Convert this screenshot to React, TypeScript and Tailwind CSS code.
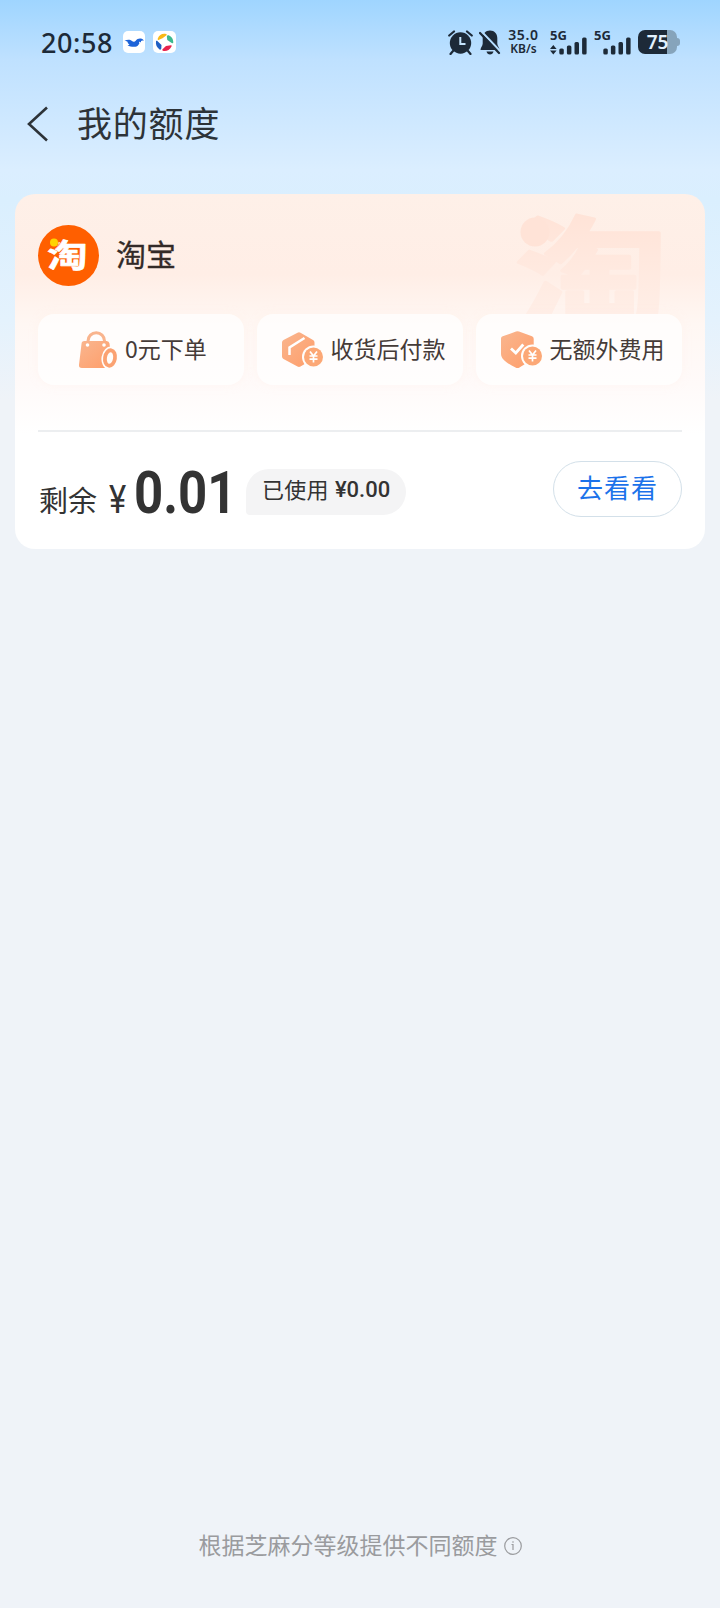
import type { ReactNode } from "react";

const Clock = () => (
    <div className="flex items-center">
        <span className="w-[73px] pl-px font-['Noto_Sans'] text-[27px] leading-none font-medium tracking-[0.6px] text-[#1d2a38]">
            20:58
        </span>
        <svg className="ml-[10px]" width="22" height="22" viewBox="0 0 22 22">
            <rect width="22" height="22" rx="5" fill="#fff" />
            <path
                d="M1.500 9.800C3.500 8.800 5.500 8.500 7.300 9c1.300.4 2.200 1.600 3.400 1.800.8.100 1.500-.3 2-1 1.200-1.700 3-2.600 5-2.300 1.500.2 2.700 1 3.300 2.300-1.200-.4-2.200-.3-3 .3.100.6 0 1-.4 1.400-.5-.6-1-.8-1.600-.6.600 1.300.3 2.300-.6 2.800-.4 1-1.400 1.900-2.900 2-2.500.4-5.500 0-8-1.500 1 0 1.600-.3 2-.8C5.300 13 4.600 12 4.500 10.800 3.500 10.200 2.500 9.900 1.500 9.800Z"
                fill="#1d63d8"
            />
        </svg>
        <svg className="ml-2" width="23" height="22" viewBox="0 0 23 22">
            <rect width="23" height="22" rx="5" fill="#fff" />
            <path d="M4.800 7.500C6 3.800 9.500 2 13 2.900c1 .300.9 1.200.2 1.600L9.500 7.300 5.500 9c-.6.100-1-.6-.7-1.500Z" fill="#f8b916" />
            <path d="M13.800 5.500c.4-1 1-1.600 1.900-1.200 3 1.200 4.600 4 4.600 6.900 0 1.200-1.300 1.300-2 .6L14.300 9Z" fill="#3cb98f" />
            <path d="M9.800 19.700c-.7-.4-.5-1.200 0-1.600l3.200-3 4.900-.9c.8 0 .9.700.6 1.200-1.900 3.600-5.200 5.200-8.700 4.300Z" fill="#e8234d" />
            <path d="M3 10.200c.4-.7 1.200-.5 1.600 0L8.500 14l-.2 3.600c-.2 1-1 1.300-1.700.8C3.800 16.500 2.500 13.500 3 10.200Z" fill="#1f5fc4" />
        </svg>
    </div>
);

const SignalBars = () => (
    <>
        <rect x="0" y="11" width="4.500" height="6" rx="1.500" />
        <rect x="7.600" y="8" width="4.500" height="9" rx="1.500" />
        <rect x="15.200" y="4.500" width="4.500" height="12.500" rx="1.500" />
        <rect x="22.800" y="0" width="4.500" height="17" rx="1.500" />
    </>
);

const Signal = ({ active }: { active?: boolean }) => (
    <div className="relative h-6 w-9 shrink-0">
        <span className="absolute top-0 left-0 font-['Noto_Sans'] text-[13px] leading-[10px] font-bold">5G</span>
        <svg className="absolute top-0 left-0" width="38" height="25" viewBox="0 0 38 25" fill="#1d2a38">
            {active && <path d="M0 19 3.300 15l3.300 4ZM0 20.500l3.300 4 3.300-4Z" />}
            <g transform="translate(9.300 7.500)">
                <SignalBars />
            </g>
        </svg>
    </div>
);

const StatusBar = () => (
    <div className="flex h-[84px] items-center justify-between px-[40px] text-[#1d2a38]">
        <Clock />
        <div className="flex items-center">
            <svg width="25" height="25" viewBox="0 0 25 25" fill="none">
                <circle cx="12.500" cy="13" r="10.700" fill="#1d2a38" />
                <path d="M1.200 5.500 6 1.500M23.800 5.500 19 1.500M5 21l-2.500 3M20 21l2.500 3" stroke="#1d2a38" strokeWidth="2.200" strokeLinecap="round" />
                <path d="M12.300 7v7h5.200" stroke="#c3e3fc" strokeWidth="2" />
            </svg>
            <svg className="ml-[6px]" width="22" height="25" viewBox="0 0 22 25" fill="none">
                <path d="M11 .5c4.500 0 7.300 3.300 7.300 7.500v5.500c0 2.500 2.200 4 2.200 6.500H1.500c0-2.500 2.200-4 2.200-6.500V8C3.700 3.800 6.500.5 11 .5Z" fill="#1d2a38" />
                <path d="M7.500 21.500h7c-.4 1.800-1.800 3-3.500 3s-3.100-1.200-3.500-3Z" fill="#1d2a38" />
                <path d="M2.500 1.500 22 22" stroke="#b5deff" strokeWidth="2.200" />
                <path d="M1 3l19 20" stroke="#1d2a38" strokeWidth="2.200" strokeLinecap="round" />
            </svg>
            <div className="ml-[6px] flex w-[33px] flex-col items-center font-['Noto_Sans'] leading-[14px] font-semibold">
                <span className="text-[14px] tracking-[0.7px]">35.0</span>
                <span className="text-[12px]">KB/s</span>
            </div>
            <div className="ml-[10px] flex gap-2">
                <Signal active />
                <Signal />
            </div>
            <div className="ml-[8px] flex items-center">
                <div className="flex h-6 w-[39px] items-center justify-center rounded-[7px] bg-linear-to-r from-[#1d2a38] from-75% to-[#86a4bb] to-75%">
                    <span className="font-['Noto_Sans'] text-[19px] leading-none font-semibold text-[#e2f2ff]">75</span>
                </div>
                <div className="h-2 w-[3px] rounded-r-sm bg-[#86a4bb]" />
            </div>
        </div>
    </div>
);

const Header = () => (
    <header className="flex h-20 items-center pl-[27px]">
        <svg width="22" height="36" viewBox="0 0 22 36" fill="none" stroke="#2d3338" strokeWidth="2.600">
            <path d="M20 1.500 2 18l18 16.500" />
        </svg>
        <h1 className="ml-7 pb-[5px] text-[35px] leading-none tracking-[0.8px] text-[#2d3338]">我的额度</h1>
    </header>
);

const YenCoin = () => (
    <>
        <circle cx="31.500" cy="25" r="11.500" fill="#fffdfb" />
        <circle cx="31.500" cy="25" r="9.500" fill="#fca876" />
        <path d="m28 19.500 3.500 4.500 3.500-4.500M27.500 24h8M27.500 27.200h8M31.500 24v6.500" stroke="#fff" strokeWidth="1.700" fill="none" />
    </>
);

const BagIcon = () => (
    <svg className="-ml-[4px]" width="40" height="40" viewBox="0 0 40 40" fill="none">
        <path d="M10 14v-3a8 8 0 0 1 16.500 0V14" stroke="#f9b48d" strokeWidth="3" />
        <path d="M6.500 11h22a3 3 0 0 1 3 2.600L34 35a3 3 0 0 1-3 3H4a3 3 0 0 1-3-3.300l2.500-20.700a3 3 0 0 1 3-3Z" fill="url(#orange)" />
        <circle cx="9.500" cy="15" r="1.800" fill="#fff" />
        <circle cx="26" cy="15" r="1.800" fill="#fff" />
        <ellipse cx="32" cy="28" rx="8.500" ry="11.500" transform="rotate(9 32 28)" fill="#fffdfb" />
        <ellipse cx="32" cy="28" rx="5" ry="7.800" transform="rotate(9 32 28)" stroke="#fba272" strokeWidth="3.800" />
    </svg>
);

const BoxIcon = () => (
    <svg width="42" height="36" viewBox="0 0 42 36" fill="none">
        <path d="M15.500.8a3 3 0 0 1 3 0L31 8a3 3 0 0 1 1.500 2.600v14A3 3 0 0 1 31 27L18.500 34.500a3 3 0 0 1-3 0L1.500 27A3 3 0 0 1 0 24.500v-14A3 3 0 0 1 1.500 8Z" fill="url(#orange)" />
        <path d="M7.500 23v-7.500L22.500 6" stroke="#fff" strokeWidth="2.500" />
        <YenCoin />
    </svg>
);

const ShieldIcon = () => (
    <svg width="42" height="38" viewBox="0 0 42 38" fill="none">
        <path d="M15 .6a4 4 0 0 1 3 0L31 5.300a2.500 2.500 0 0 1 1.700 2.400V23c0 5-8 10-14.200 13.500a4 4 0 0 1-4 0C8 33 0 29 0 23V7.700a2.500 2.500 0 0 1 1.700-2.400Z" fill="url(#orange)" />
        <path d="m10 17.500 4.800 4.500 7.500-8.500" stroke="#fff" strokeWidth="2.800" />
        <YenCoin />
    </svg>
);

const Feature = ({ icon, label }: { icon: ReactNode; label: string }) => (
    <li className="flex h-[71px] flex-1 items-center justify-center gap-[7px] rounded-2xl bg-white/70 pl-[7px] shadow-[0_0_8px_rgba(255,240,232,0.35)]">
        {icon}
        <span className="pb-[3px] text-[23px] leading-none whitespace-nowrap text-[#453b38]">{label}</span>
    </li>
);

const TaobaoLogo = () => (
    <svg className="size-[61px]" viewBox="0 0 61 61">
        <circle cx="30.500" cy="30.500" r="30.500" fill="#ff5f00" />
        <text transform="translate(9 42) scale(1.04 0.82)" fontSize="39" fontWeight="700" fill="#fff" stroke="#fff" strokeWidth="0.700" strokeLinejoin="round">
            淘
        </text>
        <circle cx="15.500" cy="17.500" r="5" fill="#ff5f00" />
        <circle cx="16" cy="17.500" r="4" fill="#ffd400" />
    </svg>
);

const Watermark = () => (
    <svg className="absolute top-[14px] right-[24px]" width="168" height="106" viewBox="0 0 168 106">
        <defs>
            <linearGradient id="fade" x1="0" y1="0" x2="0" y2="1">
                <stop offset="0.200" stopColor="#ffe3d7" />
                <stop offset="0.850" stopColor="#fff0e9" />
            </linearGradient>
        </defs>
        <text transform="translate(2 115) scale(1.02 0.84)" fontSize="150" fontWeight="700" fill="url(#fade)" stroke="url(#fade)" strokeWidth="4" strokeLinejoin="round">
            淘
        </text>
        <circle cx="22" cy="24" r="14.500" fill="#ffe3d7" />
    </svg>
);

const QuotaCard = () => (
    <section className="relative mx-[15px] mt-[30px] h-[355px] rounded-[20px] bg-[linear-gradient(180deg,#fef0e8_0px,#ffeee6_80px,#fff7f3_130px,#fffaf9_190px,#ffffff_240px)] px-[23px]">
        <Watermark />
        <div className="relative flex items-center gap-[17px] pt-[31px]">
            <TaobaoLogo />
            <h2 className="pb-[6px] text-[30px] leading-none text-[#332a27] [-webkit-text-stroke:0.3px_#332a27]">淘宝</h2>
        </div>
        <ul className="relative mt-[28px] flex gap-[13px]">
            <Feature icon={<BagIcon />} label="0元下单" />
            <Feature icon={<BoxIcon />} label="收货后付款" />
            <Feature icon={<ShieldIcon />} label="无额外费用" />
        </ul>
        <div className="mt-[45px] h-[2px] bg-[#eceef0]" />
        <div className="flex pt-[29px] text-[#333]">
            <span className="mt-[24px] w-[71px] pl-px text-[29px] leading-[29px]">剩余</span>
            <span className="mt-[20px] w-[25px] font-['Roboto'] text-[38px] leading-[38px]">
                <span className="inline-block origin-left scale-x-[0.86]">¥</span>
            </span>
            <span className="mt-[2px] w-[112px] font-['Roboto'] text-[60px] leading-[60px] font-bold">
                <span className="inline-block origin-left scale-x-[0.85]">0.01</span>
            </span>
            <div className="mt-2 flex h-[46px] w-[160px] items-center rounded-[23px] rounded-bl-[4px] bg-[#f4f4f5] pl-[16px] text-[22px] leading-none">
                <span className="pb-[8px] tracking-[0.3px]">已使用</span>
                <span className="ml-[6px] pb-[5px] font-['Roboto'] font-medium">¥0.00</span>
            </div>
            <button className="ml-auto h-[56px] w-[129px] rounded-full border border-[#d3e0e9] pb-[5px] text-[26px] leading-none tracking-[1px] text-[#1b72ea]">
                去看看
            </button>
        </div>
    </section>
);

const Footer = () => (
    <footer className="mt-auto flex items-center justify-center gap-[6px] pb-[50px] text-[#9a9b9e]">
        <span className="pb-[2px] text-[23px] leading-[23px]">根据芝麻分等级提供不同额度</span>
        <svg width="18" height="18" viewBox="0 0 18 18" fill="none" stroke="#9a9b9e" strokeWidth="1.200">
            <circle cx="9" cy="9" r="8.300" />
            <path d="M7.500 7.500H9V13M9 4.300v1.500" />
        </svg>
    </footer>
);

export default function App() {
    return (
        <main className="flex h-[1608px] w-[720px] flex-col bg-[#eff3f8] bg-[linear-gradient(180deg,#9fd5ff_0px,#bfe1ff_60px,#dbeeff_170px,#daeffe_200px,#e4f2fd_320px,#eff3f8_400px)] font-['Noto_Sans_CJK_SC',sans-serif]">
            <svg className="absolute size-0">
                <defs>
                    <linearGradient id="orange" x1="0" y1="0" x2="1" y2="1">
                        <stop offset="0" stopColor="#f9b68f" />
                        <stop offset="1" stopColor="#ff9d69" />
                    </linearGradient>
                </defs>
            </svg>
            <StatusBar />
            <Header />
            <QuotaCard />
            <Footer />
        </main>
    );
}
